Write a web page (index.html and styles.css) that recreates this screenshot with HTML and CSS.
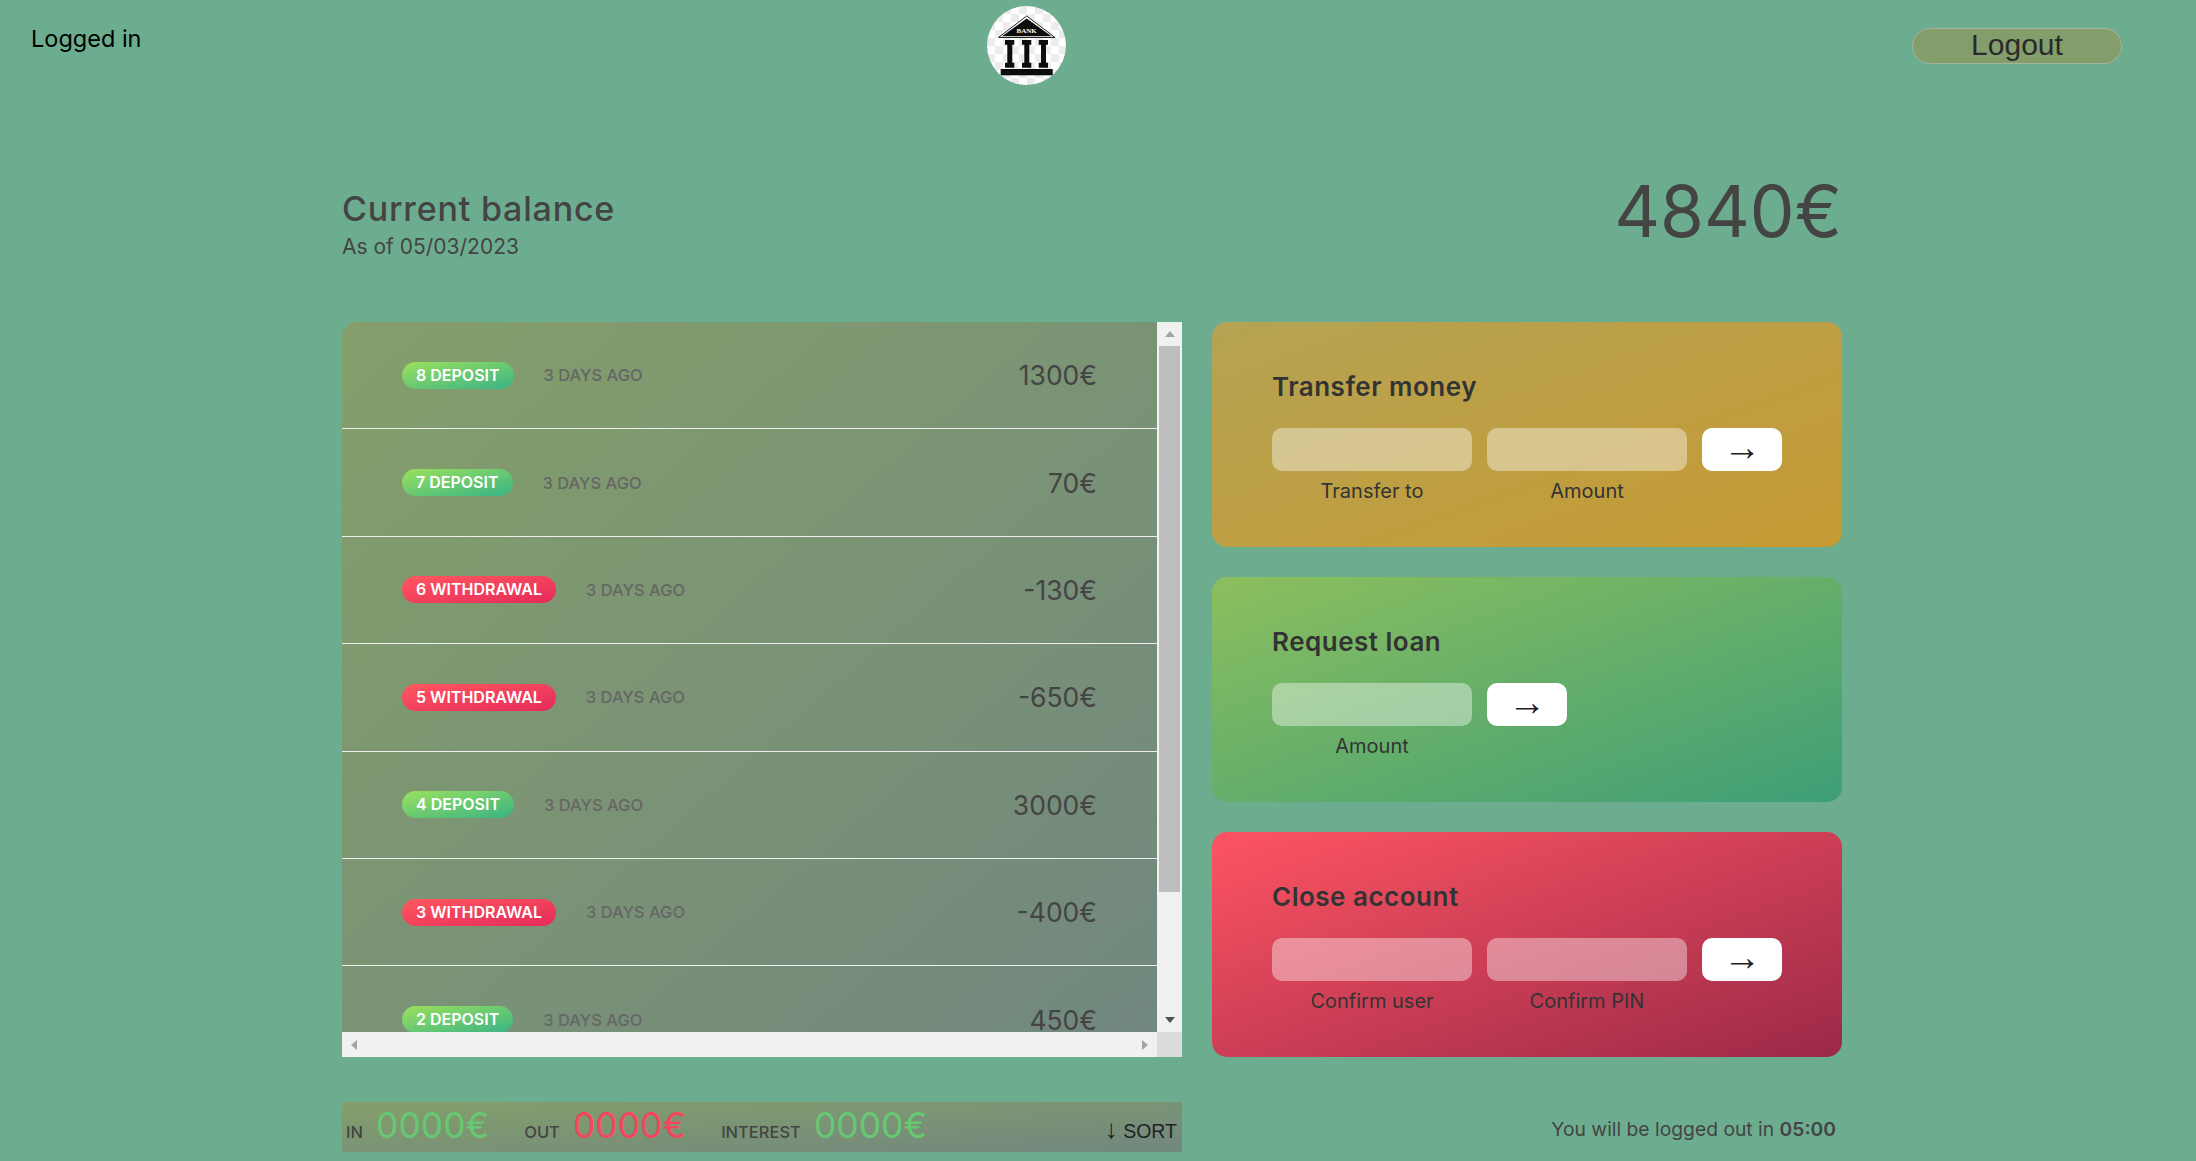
FILE: index.html
```html
<!DOCTYPE html>
<html lang="en">
<head>
  <meta charset="UTF-8">
  <title>Bank</title>
  <meta name="viewport" content="width=device-width, initial-scale=1.0">
  <link rel="stylesheet" href="styles.css">
</head>
<body>

  <nav class="nav">
    <p class="welcome">Logged in</p>
    <svg class="logo" viewBox="0 0 79 79" role="img" aria-label="Bank logo">
      <defs>
        <pattern id="checker" width="16" height="16" patternUnits="userSpaceOnUse">
          <rect width="16" height="16" fill="#fff"/>
          <rect width="8" height="8" fill="#ececec"/>
          <rect x="8" y="8" width="8" height="8" fill="#ececec"/>
        </pattern>
      </defs>
      <circle cx="39.5" cy="39.5" r="39.5" fill="url(#checker)"/>
      <path d="M39.7 10 L68 31.5 L11.5 31.5 Z" fill="#fff" stroke="#222" stroke-width="1" stroke-linejoin="round"/>
      <path d="M39.7 12.6 L64.5 30.2 L15 30.2 Z" fill="#0d0d0d"/>
      <text x="39.7" y="26.5" class="logo-text" text-anchor="middle">BANK</text>
      <path fill="#0d0d0d" d="M18 34h9.3v4.7h-2v18h2v5H18v-5h2.3v-18H18z"/>
      <path fill="#0d0d0d" d="M35 34h9.3v4.7h-2v18h2v5H35v-5h2.3v-18H35z"/>
      <path fill="#0d0d0d" d="M51.7 34H61v4.7h-2v18h2v5h-9.3v-5H54v-18h-2.3z"/>
      <rect x="13.7" y="63" width="52" height="6.3" fill="#0d0d0d"/>
    </svg>
    <button class="logout">Logout</button>
  </nav>

  <main class="app">
    <div class="balance">
      <div>
        <p class="balance-label">Current balance</p>
        <p class="balance-date">As of <span>05/03/2023</span></p>
      </div>
      <p class="balance-value">4840€</p>
    </div>

    <div class="movements">
      <div class="movements-list">
        <div class="movements-row">
          <div class="movements-type type-deposit">8 deposit</div>
          <div class="movements-date">3 days ago</div>
          <div class="movements-value">1300€</div>
        </div>
        <div class="movements-row">
          <div class="movements-type type-deposit">7 deposit</div>
          <div class="movements-date">3 days ago</div>
          <div class="movements-value">70€</div>
        </div>
        <div class="movements-row">
          <div class="movements-type type-withdrawal">6 withdrawal</div>
          <div class="movements-date">3 days ago</div>
          <div class="movements-value">-130€</div>
        </div>
        <div class="movements-row">
          <div class="movements-type type-withdrawal">5 withdrawal</div>
          <div class="movements-date">3 days ago</div>
          <div class="movements-value">-650€</div>
        </div>
        <div class="movements-row">
          <div class="movements-type type-deposit">4 deposit</div>
          <div class="movements-date">3 days ago</div>
          <div class="movements-value">3000€</div>
        </div>
        <div class="movements-row">
          <div class="movements-type type-withdrawal">3 withdrawal</div>
          <div class="movements-date">3 days ago</div>
          <div class="movements-value">-400€</div>
        </div>
        <div class="movements-row">
          <div class="movements-type type-deposit">2 deposit</div>
          <div class="movements-date">3 days ago</div>
          <div class="movements-value">450€</div>
        </div>
      </div>
      <div class="scroll-y">
        <span class="arrow arrow-up"></span>
        <div class="scroll-y-track"><div class="scroll-y-thumb"></div></div>
        <span class="arrow arrow-down"></span>
      </div>
      <div class="scroll-x">
        <span class="arrow arrow-left"></span>
        <span class="arrow arrow-right"></span>
      </div>
      <div class="scroll-corner"></div>
    </div>

    <div class="operation operation-transfer">
      <h2>Transfer money</h2>
      <form class="form">
        <input class="form-input" type="text">
        <input class="form-input" type="text">
        <button class="form-btn" type="button">→</button>
        <label class="form-label">Transfer to</label>
        <label class="form-label">Amount</label>
      </form>
    </div>

    <div class="operation operation-loan">
      <h2>Request loan</h2>
      <form class="form">
        <input class="form-input" type="text">
        <button class="form-btn" type="button">→</button>
        <label class="form-label">Amount</label>
      </form>
    </div>

    <div class="operation operation-close">
      <h2>Close account</h2>
      <form class="form">
        <input class="form-input" type="text">
        <input class="form-input" type="text">
        <button class="form-btn" type="button">→</button>
        <label class="form-label">Confirm user</label>
        <label class="form-label">Confirm PIN</label>
      </form>
    </div>

    <div class="summary">
      <p class="summary-label">In</p>
      <p class="summary-value value-in">0000€</p>
      <p class="summary-label">Out</p>
      <p class="summary-value value-out">0000€</p>
      <p class="summary-label">Interest</p>
      <p class="summary-value value-in">0000€</p>
      <button class="btn-sort"><span class="sort-arrow">↓</span> SORT</button>
    </div>

    <p class="logout-timer">You will be logged out in <span>05:00</span></p>
  </main>

</body>
</html>
```

FILE: styles.css
```css
* {
  margin: 0;
  padding: 0;
  box-sizing: border-box;
}

body {
  font-family: 'Inter', 'Open Sans', sans-serif;
  color: #444;
  background-color: #6dad8f;
  height: 1161px;
  overflow: hidden;
}

.nav {
  display: flex;
  justify-content: space-between;
  align-items: center;
  height: 91px;
  padding: 0 74px 0 31px;
}

.welcome {
  font-size: 23.5px;
  color: #000;
  margin-bottom: 14px;
}

.logo {
  width: 79px;
  height: 79px;
}

.logo-text {
  font-family: 'Liberation Serif', serif;
  font-size: 7px;
  font-weight: bold;
  fill: #fff;
}

.logout {
  width: 210px;
  height: 36px;
  padding-bottom: 2px;
  font-family: 'Liberation Sans', sans-serif;
  font-size: 30px;
  line-height: 30px;
  color: #2a2a2a;
  background: #839e6a;
  border: 1.5px solid #a9b39c;
  border-radius: 18px;
}

.app {
  display: grid;
  grid-template-columns: 4fr 3fr;
  grid-template-rows: 201px 225px 225px 225px auto;
  column-gap: 30px;
  row-gap: 30px;
  width: 1500px;
  margin-left: 342px;
}

.balance {
  grid-column: 1 / span 2;
  display: flex;
  justify-content: space-between;
  padding-top: 97px;
}

.balance-label {
  font-size: 34px;
  line-height: 42px;
  letter-spacing: 0.8px;
  font-weight: 500;
}

.balance-date {
  font-size: 21px;
  line-height: 34px;
}

.balance-value {
  font-size: 71px;
  line-height: 46px;
}

.movements {
  grid-row: 2 / span 3;
  display: grid;
  grid-template-columns: 815px 25px;
  grid-template-rows: 710px 25px;
  overflow: hidden;
}

.movements-list {
  overflow: hidden;
  border-radius: 15px 0 0 0;
  background: linear-gradient(to bottom right, #849f6a, #71877f);
}

.movements-row {
  display: flex;
  align-items: center;
  height: 107.4px;
  padding: 0 60px;
  border-bottom: 1px solid #eee;
}

.movements-type {
  font-size: 16px;
  font-weight: 600;
  line-height: 27px;
  color: #fff;
  text-transform: uppercase;
  padding: 0 14px;
  border-radius: 15px;
  margin-right: 30px;
}

.type-deposit {
  background-image: linear-gradient(to top left, #39b385, #9be15d);
}

.type-withdrawal {
  background-image: linear-gradient(to top left, #e52a5a, #ff585f);
}

.movements-date {
  font-size: 16.5px;
  font-weight: 500;
  color: #666;
  text-transform: uppercase;
}

.movements-value {
  font-size: 26.5px;
  margin-left: auto;
}

.scroll-y {
  display: flex;
  flex-direction: column;
  align-items: center;
  background: #f1f1f1;
}

.scroll-y-track {
  flex: 1;
  width: 100%;
}

.scroll-y-thumb {
  width: 21px;
  height: 546px;
  margin: 0 auto;
  background: #bebebe;
}

.scroll-x {
  display: flex;
  justify-content: space-between;
  align-items: center;
  padding: 0 9px;
  background: #f1f1f1;
}

.scroll-corner {
  background: #dcdcdc;
}

.arrow {
  display: block;
  width: 0;
  height: 0;
  border-style: solid;
  border-color: transparent;
}

.arrow-up {
  margin: 9px 0;
  border-width: 0 5.5px 6px;
  border-bottom-color: #a3a3a3;
}

.arrow-down {
  margin: 9px 0 9px;
  border-width: 6px 5.5px 0;
  border-top-color: #505050;
}

.arrow-left {
  border-width: 5.5px 6px 5.5px 0;
  border-right-color: #a3a3a3;
}

.arrow-right {
  border-width: 5.5px 0 5.5px 6px;
  border-left-color: #a3a3a3;
}

.operation {
  padding: 47px 60px 0;
  border-radius: 15px;
  color: #333;
}

.operation h2 {
  font-size: 26px;
  line-height: 36px;
  letter-spacing: 0.5px;
  font-weight: 600;
  margin-bottom: 23px;
}

.operation-transfer {
  background-image: linear-gradient(to bottom right, #b5a353, #c69a33);
}

.operation-loan {
  background-image: linear-gradient(to bottom right, #8cbf5d, #3e9e77);
}

.operation-close {
  background-image: linear-gradient(to bottom right, #fe5462, #9b2948);
}

.form {
  display: grid;
  grid-template-columns: 200px 200px 80px;
  column-gap: 15px;
  row-gap: 5px;
}

.operation-loan .form {
  grid-template-columns: 200px 80px;
}

.form-input {
  height: 43px;
  border: none;
  border-radius: 10px;
  background-color: rgba(255, 255, 255, 0.4);
}

.form-btn {
  height: 43px;
  padding-bottom: 6px;
  font-size: 38px;
  line-height: 30px;
  font-family: 'Liberation Serif', serif;
  color: #222;
  background: #fff;
  border: none;
  border-radius: 10px;
}

.form-label {
  grid-row: 2;
  font-size: 20px;
  line-height: 30px;
  text-align: center;
}

.summary {
  display: flex;
  align-items: baseline;
  height: 50px;
  margin-top: 15px;
  padding: 0 4px;
  background: linear-gradient(to bottom right, #849f6a, #71877f);
  overflow: hidden;
}

.summary-label {
  font-size: 16.5px;
  font-weight: 500;
  text-transform: uppercase;
  margin-right: 13px;
}

.summary-value {
  font-size: 35.5px;
  line-height: 48px;
  margin-right: 35px;
}

.value-in {
  color: #66c873;
}

.value-out {
  color: #f5465d;
}

.btn-sort {
  margin-left: auto;
  margin-right: 1px;
  font-family: 'Liberation Sans', sans-serif;
  font-size: 19.5px;
  background: none;
  border: none;
  color: #222;
}

.sort-arrow {
  font-size: 26px;
  line-height: 19px;
}

.logout-timer {
  align-self: center;
  justify-self: end;
  margin-top: 18px;
  padding-right: 6px;
  font-size: 19.3px;
}

.logout-timer span {
  font-weight: 600;
}
```
